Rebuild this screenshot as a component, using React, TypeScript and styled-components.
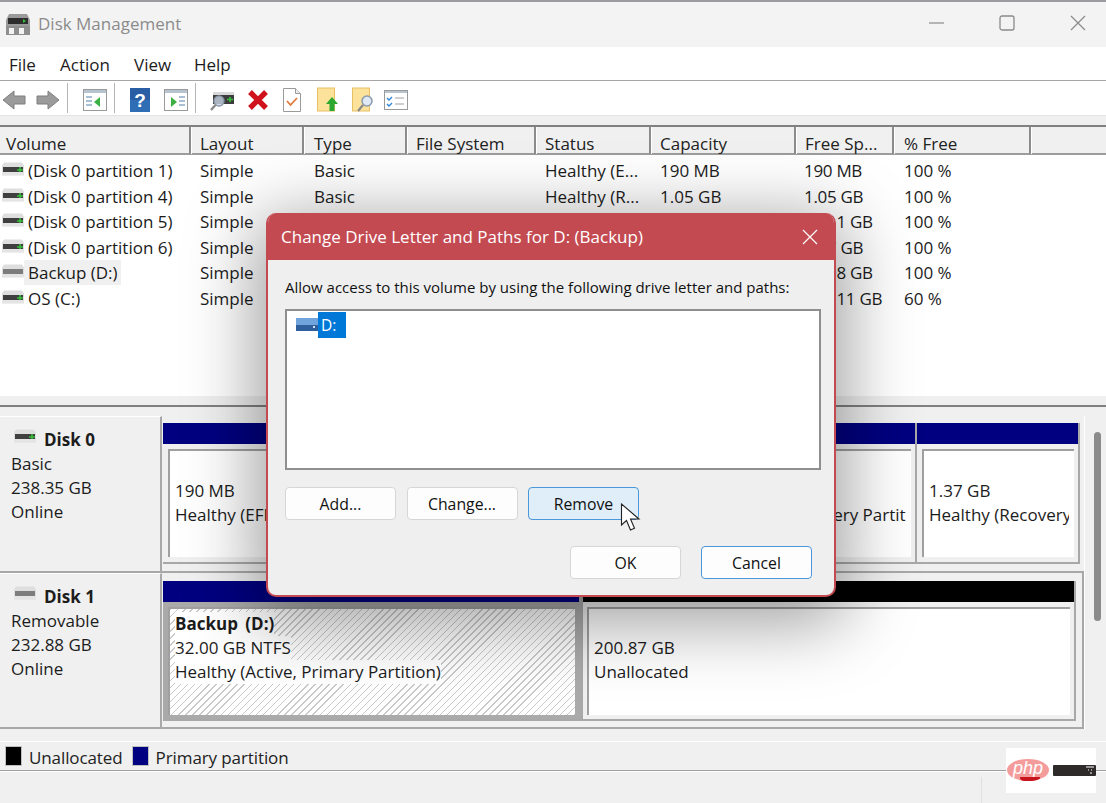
import React from "react";
import styled, { createGlobalStyle } from "styled-components";

const Global = createGlobalStyle`
  html, body { margin: 0; padding: 0; background: #f0f0f0; }
  body { font-family: "Open Sans", "Noto Sans", sans-serif; font-size: 17px; color: #1a1a1a; }
  * { box-sizing: border-box; }
`;

const Page = styled.div`
  position: relative; width: 1106px; height: 803px; overflow: hidden;
  display: flex; flex-direction: column; background: #f0f0f0;
`;
const TopEdge = styled.div`height: 2px; background: #9c9ca0; flex: none;`;
const TitleBar = styled.div`
  height: 45px; flex: none; background: #f3f3f3; display: flex; align-items: center;
  padding-left: 6px; position: relative;
`;
const AppTitle = styled.span`font-size: 17px; color: #8b8b8b; margin-left: 8px; margin-top: -3px;`;
const WinControls = styled.div`margin-left: auto; display: flex; align-items: center;`;
const WinButton = styled.svg<{ $w: number }>`width: 16px; height: 16px; margin-right: ${p => p.$w}px; display:block; margin-top: -3px;`;
const MenuBar = styled.div`
  height: 34px; flex: none; background: #fff; border-bottom: 1px solid #a6a6a6;
  display: flex; align-items: center; padding-left: 9px;
`;
const MenuItem = styled.span<{ $w: number }>`width: ${p => p.$w}px; font-size: 17px; color: #1c1c1c; margin-top: 2px;`;
const ToolBar = styled.div`
  height: 35px; flex: none; background: #fff; border-bottom: 1px solid #e4e4e4;
  display: flex; align-items: center;
`;
const ToolIcon = styled.svg<{ $left: number; $w: number }>`
  flex: none; width: ${p => p.$w}px; height: 26px; margin: 3px 0 0 ${p => p.$left}px; display: block;
`;
const ToolSep = styled.div<{ $left: number }>`
  flex: none; width: 1px; height: 30px; background: #b4b4b4; margin-left: ${p => p.$left}px;
`;
const Band = styled.div<{ $h: number }>`height: ${p => p.$h}px; flex: none; background: #f0f0f0;`;
const Rule = styled.div`height: 2px; flex: none; background: #808080;`;

const HeaderRow = styled.div`display: flex; height: 28px; flex: none; background: #f0f0f0; border-bottom: 2px solid #9c9c9c;`;
const HeaderCell = styled.div<{ $w: number; $pad: number }>`
  flex: none; width: ${p => p.$w}px; padding-left: ${p => p.$pad}px; font-size: 17px; line-height: 33px;
  border-right: 2px solid #8c8c8c; box-shadow: 1px 0 0 #fff; white-space: nowrap; overflow: hidden; color: #222; height: 27px;
`;
const HeaderFill = styled.div`flex: 1;`;
const ListArea = styled.div`height: 240px; flex: none; background: #fff; padding-top: 3px;`;
const Row = styled.div`display: flex; height: 25.5px; align-items: center;`;
const Cell = styled.div<{ $w: number; $pad: number; $tight?: boolean }>`
  flex: none; width: ${p => p.$w}px; padding-left: ${p => p.$pad}px; font-size: 17px; white-space: nowrap; color: #1c1c1c;
  letter-spacing: ${p => (p.$tight ? "-0.3px" : "0")};
`;
const VolumeCell = styled.div<{ $w: number }>`flex: none; width: ${p => p.$w}px; display: flex; align-items: center; padding-left: 2px;`;
const VolumeName = styled.span<{ $selected?: boolean }>`
  margin-left: 0; padding: 0 3px 0 4px; height: 25px; line-height: 25px; font-size: 17px; white-space: nowrap;
  background: ${p => (p.$selected ? "#f0f0f0" : "transparent")};
`;
const DiskGlyph = styled.svg<{ $raised?: boolean }>`
  width: 22px; height: 14px; flex: none; display: block; margin-top: ${p => (p.$raised ? "-8px" : "-3px")};
`;

const SplitHigh = styled.div`height: 10px; flex: none; background: linear-gradient(#fff 0 1px, #f0f0f0 1px);`;
const Lower = styled.div`height: 313px; flex: none; display: flex; margin-top: 9px;`;
const DiskColumn = styled.div`width: 1084px; flex: none; display: flex; flex-direction: column;`;
const ScrollTrack = styled.div`flex: 1; background: #f0f0f0; border-left: 1px solid #fff; padding: 16px 0 0 9px;`;
const ScrollThumb = styled.div`width: 7px; height: 189px; border-radius: 4px; background: #8b8b8b;`;
const DiskRow = styled.div<{ $h: number }>`height: ${p => p.$h}px; flex: none; display: flex;`;
const DiskLabel = styled.div`
  width: 162px; flex: none; background: #f0f0f0; border-top: 1px solid #fff; border-bottom: 2px solid #a8a8a8;
  border-right: 2px solid #a8a8a8; padding: 11px 0 0 11px; font-size: 17px; line-height: 24px; color: #1c1c1c;
`;
const DiskName = styled.div`display: flex; align-items: center; font-weight: 700; margin-left: 3px; height: 24px;`;
const DiskNameText = styled.span`margin-left: 8px;`;
const DiskLine = styled.div`white-space: nowrap;`;
const PartArea = styled.div<{ $top: number; $edge?: boolean }>`
  flex: 1; display: flex; padding: ${p => p.$top}px 0 0 1px; background: #f0f0f0;
  border-bottom: 2px solid #a8a8a8; border-right: ${p => (p.$edge ? "2px solid #a8a8a8" : "0")};
`;
const Partition = styled.div<{ $w: number; $h: number; $sel?: boolean }>`
  flex: none; width: ${p => p.$w}px; height: ${p => p.$h}px; display: flex; flex-direction: column;
  background: ${p => (p.$sel ? "#aaaaaa" : "#f0f0f0")}; border-right: 2px solid #a8a8a8; border-bottom: 2px solid #a8a8a8;
  padding: ${p => (p.$sel ? "0 2px 0 0" : "0")};
`;
const PartHead = styled.div<{ $color: string }>`height: 21px; flex: none; background: ${p => p.$color};`;
const PartBox = styled.div<{ $hatch?: boolean; $top: number; $ml: number }>`
  flex: none; height: 108px; margin: 5px 4px 0 ${p => p.$ml}px; padding: ${p => p.$top}px 5px 0 5px; overflow: hidden;
  border-top: 2px solid #a0a0a0; border-left: 2px solid #a0a0a0;
  background: ${p => p.$hatch ? "repeating-linear-gradient(-45deg, #c9c9c9 0 1px, #fff 1px 5px)" : "#fff"};
`;
const PartText = styled.div`
  overflow: hidden; font-size: 17px; line-height: 24px; color: #1c1c1c; white-space: nowrap;
`;
const PartLine = styled.div<{ $bold?: boolean; $hatch?: boolean }>`
  width: fit-content; font-weight: ${p => (p.$bold ? 700 : 400)};
  background: ${p => (p.$hatch ? "#fff" : "transparent")}; word-spacing: ${p => (p.$bold ? "3px" : "0")};
`;
const Legend = styled.div`
  height: 29px; flex: none; margin-top: 13px; border-bottom: 1px solid #a0a0a0; display: flex; align-items: center; padding-left: 5px;
  box-shadow: 0 -1px 0 #fff;
`;
const Swatch = styled.div<{ $c: string }>`width: 17px; height: 20px; background: ${p => p.$c}; border: 1px solid #c0c0c0; flex: none;`;
const LegendText = styled.span<{ $r: number }>`margin: 2px ${p => p.$r}px 0 7px; font-size: 17px; white-space: nowrap; color: #222; letter-spacing: -0.1px;`;
const StatusBar = styled.div`flex: 1; border-top: 1px solid #fff; display: flex; justify-content: flex-end; padding-top: 5px;`;
const StatusDivider = styled.div`width: 1px; background: #e0e0e0; margin-right: 124px;`;

const Dialog = styled.div`
  position: absolute; left: 266px; top: 213px; width: 570px; height: 384px;
  background: #efefef; border: 2px solid #c44a52; border-top: 0; border-radius: 10px; overflow: hidden;
  box-shadow: 0 16px 70px 10px rgba(0,0,0,.38);
  display: flex; flex-direction: column;
`;
const DialogHead = styled.div`
  height: 47px; flex: none; background: #c44a52; color: #fff; display: flex; align-items: center;
  padding: 0 16px 0 13px; font-size: 17px;
`;
const DialogClose = styled.svg`margin-left: auto; width: 16px; height: 16px; display: block;`;
const DialogBody = styled.div`flex: 1; padding: 17px 15px 0 17px; display: flex; flex-direction: column;`;
const Prompt = styled.div`font-size: 15px; color: #111; line-height: 20px; white-space: nowrap;`;
const PathList = styled.div`
  margin-top: 12px; width: 536px; height: 161px; background: #fff; border: 2px solid #8f8f8f; padding: 1px 0 0 9px; display: flex; align-items: flex-start;
`;
const PathGlyph = styled.svg`width: 22px; height: 13px; margin-top: 6px; flex: none; display: block;`;
const PathSel = styled.span`
  background: #0078d7; color: #fff; width: 28px; height: 26px; font-size: 15.5px; line-height: 26px; padding-left: 3px;
`;
const ButtonRow = styled.div<{ $top: number; $left: number; $gap: number }>`
  display: flex; margin-top: ${p => p.$top}px; margin-left: ${p => p.$left}px; gap: ${p => p.$gap}px;
`;
const DlgButton = styled.div<{ $hot?: boolean; $def?: boolean }>`
  width: 111px; height: 33px; border-radius: 4px; display: flex; align-items: center; justify-content: center;
  font-size: 15.8px; color: #111; background: ${p => (p.$hot ? "#e0eef9" : "#fdfdfd")};
  border: 1px solid ${p => (p.$hot || p.$def ? "#4a97dc" : "#d6d6d6")};
`;
const Cursor = styled.svg`position: absolute; left: 620px; top: 503px; width: 21px; height: 29px;`;

const Watermark = styled.div`
  position: absolute; left: 1006px; top: 748px; width: 90px; height: 45px; background: #fff;
`;
const PhpBadge = styled.div`
  position: absolute; left: 1px; top: 11px; width: 42px; height: 22px; border-radius: 50%;
  background: #f49c9c; overflow: hidden; color: #fff; font-style: italic; font-size: 18px; line-height: 18px; text-align: center;
  font-family: "Liberation Sans", sans-serif;
`;
const PhpSmile = styled.div`position: absolute; left: 13px; bottom: 0; width: 20px; height: 4px; background: #c8141c; border-radius: 0 0 10px 10px;`;
const DarkBar = styled.svg`position: absolute; left: 47px; top: 16px; width: 43px; height: 12px;`;

const Disk = ({ plus = true, raised }: { plus?: boolean; raised?: boolean }) => (
  <DiskGlyph viewBox="0 0 22 14" $raised={raised}>
    <path d="M2 0.5h18l2 3v10H0v-10z" fill="#dedede" />
    <rect x="1" y="5" width="20" height="5" fill={plus ? "#3f3f3f" : "#7d7d7d"} />
    {plus && <path d="M15 7.2h6v1.6h-6zM17.2 5h1.6v5.5h-1.6z" fill="#35c03a" />}
    <rect x="0" y="10" width="22" height="3" fill="#e4e4e4" />
  </DiskGlyph>
);

const columns = [
  { name: "Volume", w: 191, pad: 6 }, { name: "Layout", w: 113, pad: 9 }, { name: "Type", w: 103, pad: 10 },
  { name: "File System", w: 129, pad: 9 }, { name: "Status", w: 115, pad: 9 }, { name: "Capacity", w: 145, pad: 9 },
  { name: "Free Sp...", w: 98, pad: 9 }, { name: "% Free", w: 137, pad: 10 },
];
const rows = [
  ["(Disk 0 partition 1)", "Simple", "Basic", "", "Healthy (E...", "190 MB", "190 MB", "100 %"],
  ["(Disk 0 partition 4)", "Simple", "Basic", "", "Healthy (R...", "1.05 GB", "1.05 GB", "100 %"],
  ["(Disk 0 partition 5)", "Simple", "", "", "", "", "21.11 GB", "100 %"],
  ["(Disk 0 partition 6)", "Simple", "", "", "", "", "1.37 GB", "100 %"],
  ["Backup (D:)", "Simple", "", "", "", "", "31.98 GB", "100 %"],
  ["OS (C:)", "Simple", "", "", "", "", "136.11 GB", "60 %"],
];

const Back = ({ left, flip }: { left: number; flip?: boolean }) => (
  <ToolIcon $left={left} $w={24} viewBox="0 0 24 26">
    <path d={flip ? "M1 9h11V4l11 9-11 9v-5H1z" : "M23 9H12V4L1 13l11 9v-5h11z"} fill="#9b9b9b" stroke="#7f7f7f" strokeWidth="1" />
  </ToolIcon>
);
const Pane = ({ left, right }: { left: number; right?: boolean }) => (
  <ToolIcon $left={left} $w={24} viewBox="0 0 24 26">
    <rect x=".5" y="2.5" width="23" height="21" fill="#fff" stroke="#9a9a9a" />
    <rect x="1" y="3" width="22" height="3" fill="#b8c4d0" />
    <path d={right ? "M15 10h6M15 14h6M15 18h6" : "M3 10h6M3 14h6M3 18h6"} stroke="#a8bfd4" strokeWidth="2" />
    <path d={right ? "M7 10l6 5-6 5z" : "M17 10l-6 5 6 5z"} fill="#3cb043" />
  </ToolIcon>
);

export default function App() {
  return (
    <Page>
      <Global />
      <TopEdge />
      <TitleBar>
        <svg width="24" height="23" viewBox="0 0 24 23">
          <path d="M3 1h18l3 6v15H0V7z" fill="#9a9a9a" />
          <rect x="0" y="13" width="24" height="9" fill="#8e8e8e" />
          <rect x="3" y="15" width="5" height="6" fill="#f3f3f3" />
          <rect x="13" y="15" width="5" height="6" fill="#f3f3f3" />
          <rect x="2" y="5" width="20" height="6" fill="#2d2d2d" />
          <path d="M17 6l3 2-3 2z" fill="#35c03a" />
        </svg>
        <AppTitle>Disk Management</AppTitle>
        <WinControls>
          <WinButton $w={54} viewBox="0 0 16 16"><path d="M0 8h15" stroke="#8a8a8a" strokeWidth="1.2" /></WinButton>
          <WinButton $w={55} viewBox="0 0 16 16"><rect x="1" y="1" width="14" height="14" rx="2" fill="none" stroke="#8a8a8a" strokeWidth="1.3" /></WinButton>
          <WinButton $w={20} viewBox="0 0 16 16"><path d="M1 1l14 14M15 1L1 15" stroke="#8a8a8a" strokeWidth="1.2" /></WinButton>
        </WinControls>
      </TitleBar>
      <MenuBar>
        <MenuItem $w={51}>File</MenuItem>
        <MenuItem $w={74}>Action</MenuItem>
        <MenuItem $w={60}>View</MenuItem>
        <MenuItem $w={50}>Help</MenuItem>
      </MenuBar>
      <ToolBar>
        <Back left={2} />
        <Back left={10} flip />
        <ToolSep $left={7} />
        <Pane left={15} />
        <ToolSep $left={7} />
        <ToolIcon $left={15} $w={20} viewBox="0 0 20 26">
          <rect x="0" y="1" width="20" height="24" fill="#2f6db5" />
          <rect x="0" y="1" width="20" height="12" fill="#2a5ea4" />
          <text x="10" y="20" textAnchor="middle" fill="#fff" fontSize="19" fontWeight="700" fontFamily="Liberation Sans">?</text>
        </ToolIcon>
        <Pane left={14} right />
        <ToolSep $left={7} />
        <ToolIcon $left={14} $w={24} viewBox="0 0 24 26">
          <rect x="3" y="8" width="21" height="9" fill="#3d3d3d" />
          <rect x="3" y="5" width="21" height="3" fill="#d8d8d8" />
          <path d="M17 12.5h6M20 10v5" stroke="#35c03a" strokeWidth="1.6" />
          <circle cx="9" cy="14" r="5" fill="#c8d4e4" fillOpacity=".8" stroke="#8a96a8" strokeWidth="1.4" />
          <path d="M5.5 18L1 23" stroke="#8a8a8a" strokeWidth="2.4" />
        </ToolIcon>
        <ToolIcon $left={13} $w={22} viewBox="0 0 22 26">
          <path d="M3 5l16 16M19 5L3 21" stroke="#d0121c" strokeWidth="5.4" />
        </ToolIcon>
        <ToolIcon $left={14} $w={18} viewBox="0 0 18 26">
          <path d="M.5 1.5h12l5 5v18H.5z" fill="#fff" stroke="#9a9a9a" />
          <path d="M12.5 1.5v5h5" fill="#eee" stroke="#9a9a9a" />
          <path d="M4 14l3.5 4L14 11" fill="none" stroke="#e0793a" strokeWidth="1.8" />
        </ToolIcon>
        <ToolIcon $left={16} $w={22} viewBox="0 0 22 26">
          <rect x=".5" y="1" width="17" height="23" fill="#fce29b" stroke="#e8c063" />
          <path d="M15 10l6 7h-3.5v7h-5v-7H9z" fill="#2ba82f" />
        </ToolIcon>
        <ToolIcon $left={13} $w={22} viewBox="0 0 22 26">
          <rect x=".5" y="1" width="17" height="23" fill="#fce29b" stroke="#e8c063" />
          <circle cx="15" cy="14" r="5" fill="#dfe9f5" stroke="#8a9aac" strokeWidth="1.5" />
          <path d="M11 18l-5 6" stroke="#8a8a8a" strokeWidth="2.2" />
        </ToolIcon>
        <ToolIcon $left={10} $w={24} viewBox="0 0 24 26">
          <rect x=".5" y="3.5" width="23" height="19" fill="#fff" stroke="#9a9a9a" />
          <rect x="1" y="4" width="22" height="2" fill="#b8c4d0" />
          <path d="M3 11l2 2 3-3M3 17l2 2 3-3" fill="none" stroke="#2e86d6" strokeWidth="1.4" />
          <path d="M11 11h9M11 17h9" stroke="#c0c0c0" strokeWidth="1.4" />
        </ToolIcon>
      </ToolBar>
      <Band $h={9} />
      <Rule />
      <HeaderRow>
        {columns.map(c => <HeaderCell key={c.name} $w={c.w} $pad={c.pad}>{c.name}</HeaderCell>)}
        <HeaderFill />
      </HeaderRow>
      <ListArea>
        {rows.map((r, i) => (
          <Row key={r[0]}>
            <VolumeCell $w={columns[0].w}>
              <Disk plus={i !== 4} />
              <VolumeName $selected={i === 4}>{r[0]}</VolumeName>
            </VolumeCell>
            {r.slice(1).map((v, j) => (
              <Cell key={j} $w={columns[j + 1].w} $pad={j === 5 ? 8 : columns[j + 1].pad} $tight={j === 5}>{v}</Cell>
            ))}
          </Row>
        ))}
      </ListArea>
      <SplitHigh />
      <Rule />
      <Lower>
        <DiskColumn>
          <DiskRow $h={157}>
            <DiskLabel>
              <DiskName><Disk raised /><DiskNameText>Disk 0</DiskNameText></DiskName>
              <DiskLine>Basic</DiskLine>
              <DiskLine>238.35 GB</DiskLine>
              <DiskLine>Online</DiskLine>
            </DiskLabel>
            <PartArea $top={7}>
              <Partition $w={117} $h={141}><PartHead $color="#000080" /><PartBox $top={28} $ml={5}><PartText><PartLine>190 MB</PartLine><PartLine>Healthy (EFI System Partition)</PartLine></PartText></PartBox></Partition>
              <Partition $w={424} $h={141}><PartHead $color="#000080" /><PartBox $top={28} $ml={5} /></Partition>
              <Partition $w={213} $h={141}>
                <PartHead $color="#000080" />
                <PartBox $top={28} $ml={5}><PartText><PartLine>1.05 GB</PartLine><PartLine>Healthy (Recovery Partition)</PartLine></PartText></PartBox>
              </Partition>
              <Partition $w={163} $h={141}><PartHead $color="#000080" /><PartBox $top={28} $ml={5}><PartText><PartLine>1.37 GB</PartLine><PartLine>Healthy (Recovery Partition)</PartLine></PartText></PartBox></Partition>
            </PartArea>
          </DiskRow>
          <DiskRow $h={156}>
            <DiskLabel>
              <DiskName><Disk plus={false} raised /><DiskNameText>Disk 1</DiskNameText></DiskName>
              <DiskLine>Removable</DiskLine>
              <DiskLine>232.88 GB</DiskLine>
              <DiskLine>Online</DiskLine>
            </DiskLabel>
            <PartArea $top={8} $edge>
              <Partition $w={420} $h={140} $sel>
                <PartHead $color="#000080" />
                <PartBox $hatch $top={3} $ml={5}>
                  <PartText>
                    <PartLine $bold $hatch>Backup (D:)</PartLine>
                    <PartLine $hatch>32.00 GB NTFS</PartLine>
                    <PartLine $hatch>Healthy (Active, Primary Partition)</PartLine>
                  </PartText>
                </PartBox>
              </Partition>
              <Partition $w={493} $h={140}>
                <PartHead $color="#000" />
                <PartBox $top={27} $ml={4}>
                  <PartText>
                    <PartLine>200.87 GB</PartLine>
                    <PartLine>Unallocated</PartLine>
                  </PartText>
                </PartBox>
              </Partition>
            </PartArea>
          </DiskRow>
        </DiskColumn>
        <ScrollTrack><ScrollThumb /></ScrollTrack>
      </Lower>
      <Legend>
        <Swatch $c="#000" /><LegendText $r={9}>Unallocated</LegendText>
        <Swatch $c="#000080" /><LegendText $r={0}>Primary partition</LegendText>
      </Legend>
      <StatusBar><StatusDivider /></StatusBar>

      <Dialog>
        <DialogHead>
          Change Drive Letter and Paths for D: (Backup)
          <DialogClose viewBox="0 0 16 16"><path d="M1 1l14 14M15 1L1 15" stroke="#fff" strokeWidth="1.2" /></DialogClose>
        </DialogHead>
        <DialogBody>
          <Prompt>Allow access to this volume by using the following drive letter and paths:</Prompt>
          <PathList>
            <PathGlyph viewBox="0 0 22 13">
              <rect x="0" y="0" width="22" height="7" fill="#6fa4dc" />
              <rect x="0" y="7" width="22" height="6" fill="#2f5f9c" />
              <rect x="17" y="8" width="2" height="2" fill="#cfe2f5" />
            </PathGlyph>
            <PathSel>D:</PathSel>
          </PathList>
          <ButtonRow $top={17} $left={0} $gap={10.5}>
            <DlgButton>Add...</DlgButton>
            <DlgButton>Change...</DlgButton>
            <DlgButton $hot>Remove</DlgButton>
          </ButtonRow>
          <ButtonRow $top={26} $left={285} $gap={20}>
            <DlgButton>OK</DlgButton>
            <DlgButton $def>Cancel</DlgButton>
          </ButtonRow>
        </DialogBody>
      </Dialog>
      <Cursor viewBox="0 0 21 29">
        <path d="M1.5 1v21l5-4.5 4 9.5 4-1.7-4-9.3H19z" fill="#fff" stroke="#222" strokeWidth="1.1" />
      </Cursor>
      <Watermark>
        <PhpBadge>php<PhpSmile /></PhpBadge>
        <DarkBar viewBox="0 0 43 12">
          <rect x="0" y="1" width="43" height="11" rx="1" fill="#2f2a2a" />
          <path d="M33 3h8M35 6h1M38 6h1M37 9h2" stroke="#fff" strokeWidth="1" />
        </DarkBar>
      </Watermark>
    </Page>
  );
}
